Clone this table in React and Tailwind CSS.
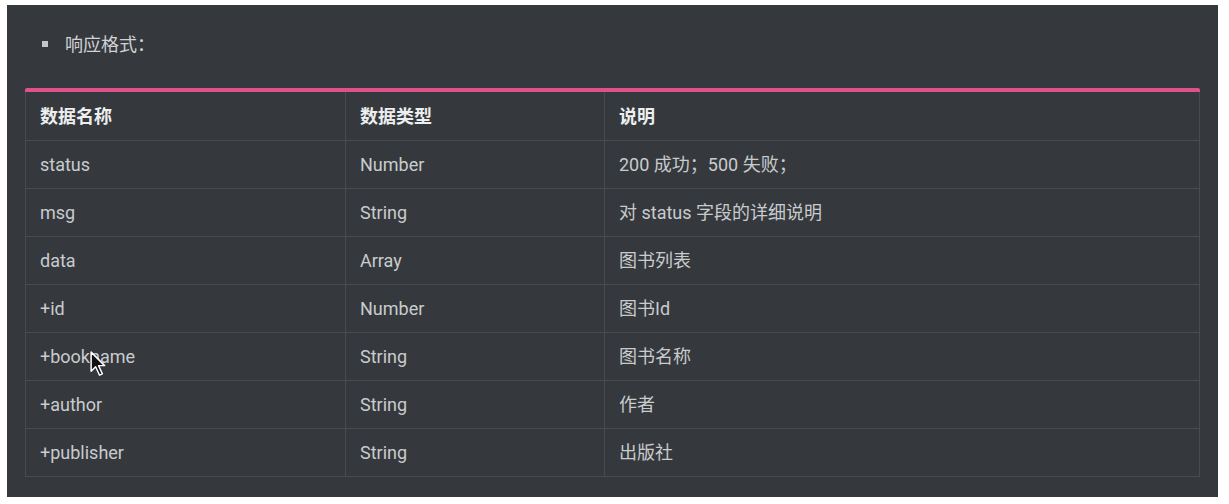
import React from 'react';

const rows = [
  ['status', 'Number', '200 成功；500 失败；'],
  ['msg', 'String', '对 status 字段的详细说明'],
  ['data', 'Array', '图书列表'],
  ['+id', 'Number', '图书Id'],
  ['+bookname', 'String', '图书名称'],
  ['+author', 'String', '作者'],
  ['+publisher', 'String', '出版社'],
];

const Cursor = () => (
  <svg className="absolute left-[83px] top-[346px]" width="18" height="27" viewBox="0 0 16 24">
    <path d="M1 1 L1 18 L5 14 L8.5 21.5 L11 20.3 L7.6 13 L13 13 Z" fill="#111" stroke="#fff" strokeWidth="1.3" strokeLinejoin="round" />
  </svg>
);

const App = () => {
  return (
    <div className="w-[1229px] h-[504px] bg-white pt-[5px] pl-[7px]" style={{ fontFamily: 'Roboto, "Noto Sans CJK SC", sans-serif' }}>
      <div className="relative w-[1211px] h-[492px] bg-[#35393d] pt-[27px] px-[18px]">
        <div className="flex items-center h-[24px] pl-[17px] gap-[17px] text-[18px] text-[#cfd1d3]">
          <span className="w-[6px] h-[6px] bg-[#c4c6c8]" />
          <span>响应格式：</span>
        </div>
        <div className="mt-[32px] w-[1175px] border-t-[4px] border-[#e0508b] rounded-t-[2px]">
          <div className="grid grid-cols-[320px_259px_1fr] border-x border-b border-[#474c51] text-[18px]">
            <div className="h-[48px] flex items-center pl-[14px] border-r border-[#474c51] font-bold text-[#eceeef]">数据名称</div>
            <div className="h-[48px] flex items-center pl-[14px] border-r border-[#474c51] font-bold text-[#eceeef]">数据类型</div>
            <div className="h-[48px] flex items-center pl-[14px] font-bold text-[#eceeef]">说明</div>
            {rows.map((r, i) => (
              <React.Fragment key={i}>
                <div className="h-[48px] flex items-center pl-[14px] border-t border-r border-[#474c51] text-[#c9cbcd]">{r[0]}</div>
                <div className="h-[48px] flex items-center pl-[14px] border-t border-r border-[#474c51] text-[#c9cbcd]">{r[1]}</div>
                <div className="h-[48px] flex items-center pl-[14px] border-t border-[#474c51] text-[#c9cbcd]">{r[2]}</div>
              </React.Fragment>
            ))}
          </div>
        </div>
        <Cursor />
      </div>
    </div>
  );
};

export default App;
